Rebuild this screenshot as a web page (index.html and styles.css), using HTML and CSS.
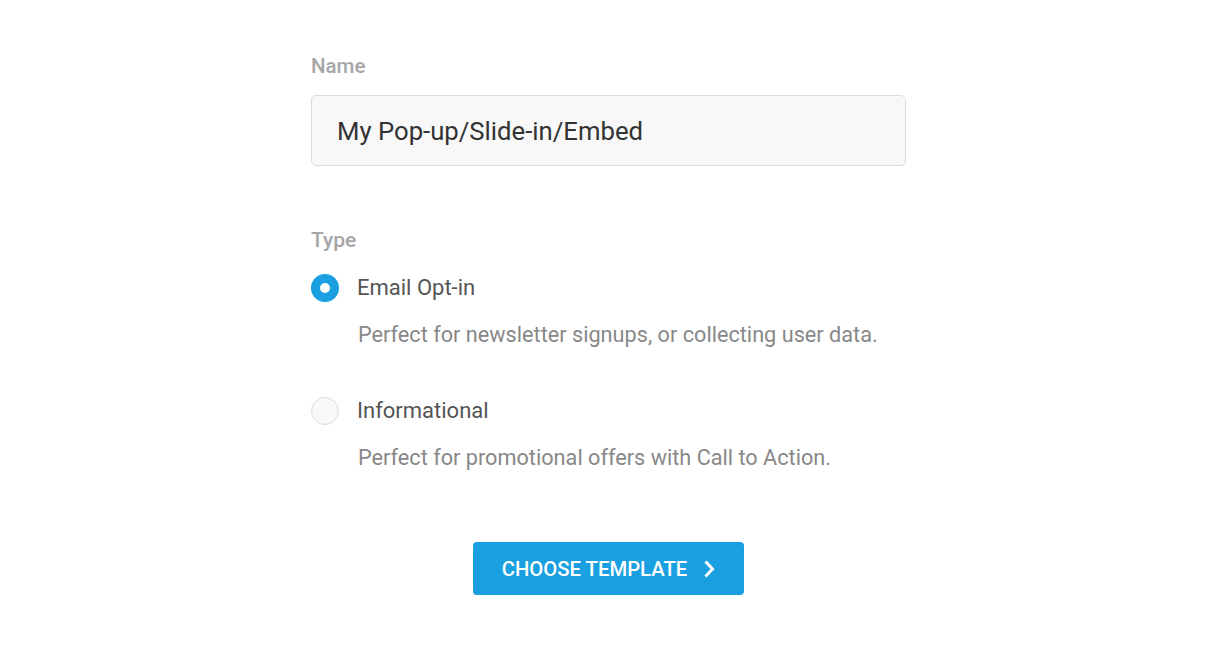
FILE: index.html
```html
<!DOCTYPE html>
<html>
<head>
<meta charset="utf-8">
<link rel="stylesheet" href="styles.css">
</head>
<body>
<div class="form">
  <div class="field">
    <div class="label">Name</div>
    <div class="input">My Pop-up/Slide-in/Embed</div>
  </div>
  <div class="field type-field">
    <div class="label">Type</div>
    <div class="option">
      <span class="radio checked"></span>
      <span class="opt-title">Email Opt-in</span>
    </div>
    <div class="opt-desc">Perfect for newsletter signups, or collecting user data.</div>
    <div class="option second">
      <span class="radio"></span>
      <span class="opt-title">Informational</span>
    </div>
    <div class="opt-desc">Perfect for promotional offers with Call to Action.</div>
  </div>
  <div class="actions">
    <button class="btn">CHOOSE TEMPLATE
      <svg class="chev" width="12" height="18" viewBox="0 0 12 18"><path d="M2.5 2.5 L8.5 9 L2.5 15.5" fill="none" stroke="#fff" stroke-width="3" stroke-linecap="square" stroke-linejoin="miter"/></svg>
    </button>
  </div>
</div>
</body>
</html>
```
FILE: styles.css
```css
html, body {
  margin: 0;
  padding: 0;
  background: #fff;
  font-family: Roboto, "Liberation Sans", sans-serif;
}
body {
  padding-right: 3px;
}
.form {
  width: 595px;
  margin: 0 auto;
  padding-top: 54px;
}
.label {
  font-size: 20.5px;
  font-weight: 500;
  color: #a6a6a6;
  line-height: 24px;
}
.type-field .label {
  font-size: 21px;
}
.input {
  margin-top: 17px;
  height: 69px;
  border: 1px solid #dcdcdc;
  border-radius: 5px;
  background: #f8f8f8;
  display: flex;
  align-items: center;
  padding-left: 25px;
  font-size: 25.7px;
  color: #333;
}
.type-field {
  margin-top: 62px;
}
.option {
  display: flex;
  align-items: center;
  margin-top: 22px;
  height: 28px;
}
.option.second {
  margin-top: 50px;
}
.radio {
  width: 26px;
  height: 26px;
  border-radius: 50%;
  border: 1px solid #dedede;
  background: #f8f8f8;
  box-sizing: content-box;
  flex: none;
}
.radio.checked {
  width: 10px;
  height: 10px;
  border: 9px solid #1a9fe0;
  background: #fff;
}
.opt-title {
  margin-left: 18px;
  font-size: 22px;
  color: #555;
  line-height: 28px;
}
.opt-desc {
  margin-top: 21px;
  margin-left: 47px;
  font-size: 21.7px;
  color: #888;
  line-height: 24px;
}
.actions {
  display: flex;
  justify-content: center;
  margin-top: 72px;
}
.btn {
  width: 271px;
  height: 53px;
  background: #1a9fe0;
  border: none;
  border-radius: 4px;
  color: #fff;
  font-family: Roboto, "Liberation Sans", sans-serif;
  font-size: 20.3px;
  font-weight: 500;
  display: flex;
  align-items: center;
  justify-content: center;
  gap: 17px;
  padding: 0 0 0 1px;
}
.chev {
  display: block;
}
```
